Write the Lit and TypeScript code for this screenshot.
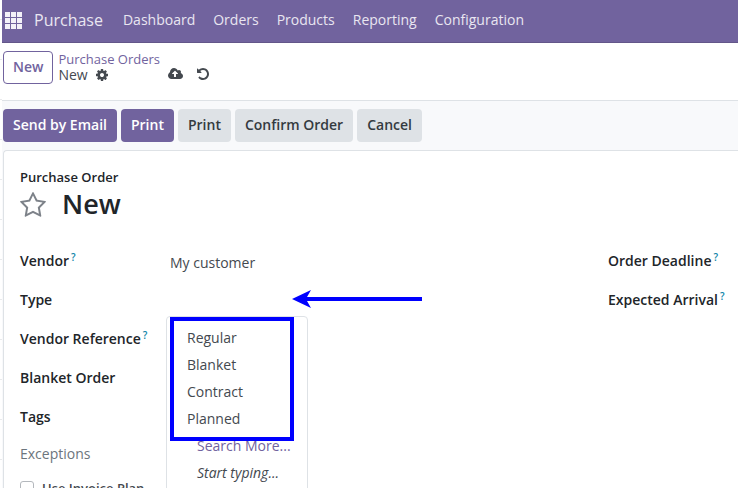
import { LitElement, html, css, svg, nothing } from "lit";
import { customElement, state } from "lit/decorators.js";

const ICONS: Record<string, { box: string; path: string }> = {
  cog: {
    box: "128 128 1536 1536",
    path: "M1152 896q0-106-75-181t-181-75-181 75-75 181 75 181 181 75 181-75 75-181zm512-109v222q0 12-8 23t-20 13l-185 28q-19 54-39 91 35 50 107 138 10 12 10 25t-9 23q-27 37-99 108t-94 71q-12 0-26-9l-138-108q-44 23-91 38-16 136-29 186-7 28-36 28h-222q-14 0-24.500-8.500t-11.500-21.500l-28-184q-49-16-90-37l-141 107q-10 9-25 9-14 0-25-11-126-114-165-168-7-10-7-23 0-12 8-23 15-21 51-66.500t54-70.500q-27-50-41-99l-183-27q-13-2-21-12.500t-8-23.500v-222q0-12 8-23t19-13l186-28q14-46 39-92-40-57-107-138-10-12-10-24 0-10 9-23 26-36 98.500-107.500t94.500-71.500q13 0 26 10l138 107q44-23 91-38 16-136 29-186 7-28 36-28h222q14 0 24.500 8.500t11.500 21.500l28 184q49 16 90 37l142-107q9-9 24-9 13 0 25 10 129 119 165 170 7 8 7 22 0 12-8 23-15 21-51 66.500t-54 70.500q26 50 41 98l183 28q13 2 21 12.500t8 23.500z",
  },
  cloud: {
    box: "-64 128 1920 1536",
    path: "M1216 864q0-14-9-23l-352-352q-9-9-23-9t-23 9l-351 351q-10 12-10 24 0 14 9 23t23 9h224v352q0 13 9.500 22.500t22.500 9.500h192q13 0 22.500-9.500t9.500-22.500v-352h224q13 0 22.500-9.500t9.500-22.500zm640 288q0 159-112.500 271.500t-271.500 112.500h-1088q-185 0-316.500-131.500t-131.500-316.500q0-130 70-240t188-165q-2-30-2-43 0-212 150-362t362-150q156 0 285.500 87t188.500 231q71-62 166-62 106 0 181 75t75 181q0 76-41 138 130 31 213.500 135.500t83.500 238.500z",
  },
  undo: {
    box: "128 128 1536 1536",
    path: "M1664 896q0 156-61 298t-164 245-245 164-298 61q-172 0-327-72.500t-264-204.500q-7-10-6.500-22.500t8.500-20.500l137-138q10-9 25-9 16 2 23 12 73 95 179 147t225 52q104 0 198.500-40.500t163.500-109.500 109.500-163.500 40.500-198.500-40.500-198.500-109.500-163.500-163.500-109.500-198.500-40.500q-98 0-188 35.500t-160 101.500l137 138q31 30 14 69-17 40-59 40h-448q-26 0-45-19t-19-45v-448q0-42 40-59 39-17 69 14l130 129q107-101 244.500-156.500t284.500-55.500q156 0 298 61t245 164 164 245 61 298z",
  },
  star: {
    box: "0 32 1664 1600",
    path: "M1137 1004l306-297-422-62-189-382-189 382-422 62 306 297-73 421 378-199 377 199zm527-357q0 22-26 48l-363 354 86 500q1 7 1 20 0 50-41 50-19 0-40-12l-449-236-449 236q-22 12-40 12-21 0-31.500-14.500t-10.500-35.500q0-6 2-20l86-500-364-354q-25-27-25-48 0-37 56-46l502-73 225-455q19-41 49-41t49 41l225 455 502 73q56 9 56 46z",
  },
};

const icon = (name: string, cls: string) => html`
  <svg class="icon ${cls}" viewBox=${ICONS[name].box} aria-hidden="true">
    <path fill="currentColor" d=${ICONS[name].path}></path>
  </svg>`;

const MENU = ["Dashboard", "Orders", "Products", "Reporting", "Configuration"];
const TYPES = ["Regular", "Blanket", "Contract", "Planned"];

interface Field {
  id: string;
  label: string;
  help?: boolean;
  value?: string;
}

const LEFT: Field[] = [
  { id: "vendor", label: "Vendor", help: true, value: "My customer" },
  { id: "type", label: "Type" },
  { id: "reference", label: "Vendor Reference", help: true },
  { id: "blanket", label: "Blanket Order" },
  { id: "tags", label: "Tags" },
];
const RIGHT: Field[] = [
  { id: "deadline", label: "Order Deadline", help: true },
  { id: "arrival", label: "Expected Arrival", help: true },
];

@customElement("app-root")
export class AppRoot extends LitElement {
  @state() private type = "";

  static styles = css`
    :host {
      display: block;
      box-sizing: border-box;
      height: 100vh;
      overflow: hidden;
      padding: 0 0 1px 2px;
      background: repeating-linear-gradient(#fff 0 19px, #e9eaec 19px 20px, #fff 20px 40px);
      font: 14px/20px "Open Sans", "Noto Sans", sans-serif;
      color: #44494f;
    }
    * { box-sizing: border-box; }
    button, input { font: inherit; color: inherit; }
    button { cursor: pointer; }
    a { text-decoration: none; color: inherit; }
    .page {
      display: flex;
      flex-direction: column;
      height: 100%;
      overflow: hidden;
      background: #f8f9fb;
    }
    .icon { display: block; flex: none; }

    .nav {
      display: flex;
      align-items: center;
      flex: none;
      height: 43px;
      padding: 0 3px 2px;
      background: #71639e;
      border-bottom: 1px solid #635689;
      color: #e9e6f1;
    }
    .plain {
      display: flex;
      padding: 0;
      border: 0;
      background: none;
    }
    .apps { width: 17px; height: 17px; }
    .brand { margin: 0 20px 0 12px; font-size: 16px; }
    .menu { display: flex; gap: 18px; }

    .control {
      display: flex;
      align-items: flex-start;
      flex: none;
      height: 58px;
      padding: 8px 1px;
      background: #fff;
      border-bottom: 1px solid #dee2e6;
    }
    .btn {
      height: 33px;
      padding: 0 10px 1px;
      border: 0;
      border-radius: 4px;
      background: #dee2e6;
      color: #343a40;
      font-weight: 600;
      white-space: nowrap;
    }
    .primary { background: #71639e; color: #fff; }
    .outline {
      padding: 0 9px 2px;
      border: 1px solid #71639e;
      background: #fff;
      color: #71639e;
    }
    .crumbs { margin-left: 5px; line-height: 16px; }
    .crumbs a { display: block; color: #71639e; font-size: 13px; font-weight: 500; }
    .current { display: flex; align-items: center; gap: 8px; }
    .small { width: 12px; height: 12px; }
    .tools { display: flex; align-items: center; gap: 14px; margin: 17px 0 0 8px; }
    .cloud { width: 15px; height: 12px; }

    .actions { display: flex; flex: none; gap: 4px; padding: 8px 1px; }

    .sheet {
      flex: 1 0 auto;
      margin-left: 1px;
      padding: 16px 0 0 16px;
      background: #fff;
      border: solid #dee2e6;
      border-width: 1px 0 0 1px;
      border-top-left-radius: 4px;
    }
    .label, .kind {
      font-weight: 600;
      color: #212529;
      white-space: nowrap;
    }
    .kind { font-size: 13px; }
    .title { display: flex; align-items: center; gap: 16px; height: 34px; }
    .star { width: 26px; height: 25px; color: #7d8289; }
    h1 { margin: 0; font-size: 27px; line-height: 34px; font-weight: 600; color: #212529; }

    .groups { display: flex; align-items: flex-start; margin-top: 20px; }
    .group { display: flex; flex-direction: column; }
    .main { flex: 1; }
    .side { flex: 0 0 130px; }
    .row { display: flex; align-items: center; height: 39px; }
    .main .label { flex: 0 0 146px; }
    .help { margin-left: 2px; color: #0e84a8; font-size: 10px; line-height: 10px; font-weight: 600; vertical-align: 5px; }
    .value { position: relative; flex: 1; height: 31px; display: flex; align-items: center; }
    .value input { width: 138px; padding: 6px 4px 2px; border: 0; outline: 0; background: none; }

    .dropdown {
      position: absolute;
      top: 32px;
      left: 0;
      width: 142px;
      padding: 7px 0 8px;
      background: #fff;
      border: 1px solid #dee2e6;
      border-radius: 4px;
      z-index: 1;
    }
    .option {
      display: block;
      width: 100%;
      height: 27px;
      padding: 0 20px;
      border: 0;
      background: none;
      text-align: left;
    }
    .extra { padding: 0 0 0 30px; white-space: nowrap; }
    .more { color: #71639e; }
    .hint { font-style: italic; line-height: 27px; }
    .frame {
      position: absolute;
      top: 0;
      left: 3px;
      width: 124px;
      height: 124px;
      border: 4px solid #00f;
      pointer-events: none;
    }
    .arrow { position: absolute; left: 126px; top: 5px; width: 130px; height: 20px; }

    .section { height: 38px; line-height: 36px; color: #6c757d; }
    .check { display: flex; align-items: center; gap: 8px; margin-top: 4px; }
    .check input {
      appearance: none;
      width: 14px;
      height: 14px;
      margin: 0;
      border: 1px solid #b4b8bd;
      border-radius: 3px;
      background: #fff;
    }
    .check .label { color: #44494f; font-size: 13px; }
  `;

  private renderType() {
    return html`
      <svg class="arrow" viewBox="0 0 130 20" aria-hidden="true">
        ${svg`<path fill="#00f" d="M0 10 19 1 15 8H130V12H15L19 19Z"></path>`}
      </svg>
      <div class="dropdown">
        ${TYPES.map((t) => html`<button class="option" @click=${() => (this.type = t)}>${t}</button>`)}
        <button class="option extra more">Search More...</button>
        <div class="extra hint">Start typing...</div>
        <div class="frame"></div>
      </div>`;
  }

  private renderField(f: Field, withValue: boolean) {
    const value = f.id === "type" ? this.type : f.value ?? "";
    return html`
      <div class="row">
        <label class="label" for=${withValue ? f.id : nothing}>${f.label}${f.help
          ? html`<sup class="help">?</sup>`
          : nothing}</label>
        ${withValue
          ? html`<div class="value">
              <input id=${f.id} .value=${value} autocomplete="off" />
              ${f.id === "type" ? this.renderType() : nothing}
            </div>`
          : nothing}
      </div>`;
  }

  render() {
    return html`
      <div class="page">
        <nav class="nav">
          <button class="plain" aria-label="Apps">
            <svg class="icon apps" viewBox="0 0 17 17" aria-hidden="true">
              ${[0, 6, 12].map((y) => [0, 6, 12].map(
                (x) => svg`<rect x=${x} y=${y} width="5" height="5" fill="#f3f1f8"></rect>`))}
            </svg>
          </button>
          <a class="brand" href="#">Purchase</a>
          <div class="menu">${MENU.map((m) => html`<a href="#">${m}</a>`)}</div>
        </nav>
        <header class="control">
          <button class="btn outline">New</button>
          <div class="crumbs">
            <a href="#">Purchase Orders</a>
            <div class="current">
              <span>New</span>
              <button class="plain" aria-label="Actions">${icon("cog", "small")}</button>
            </div>
          </div>
          <div class="tools">
            <button class="plain" aria-label="Save">${icon("cloud", "cloud")}</button>
            <button class="plain" aria-label="Discard">${icon("undo", "small")}</button>
          </div>
        </header>
        <div class="actions">
          <button class="btn primary">Send by Email</button>
          <button class="btn primary">Print</button>
          <button class="btn">Print</button>
          <button class="btn">Confirm Order</button>
          <button class="btn">Cancel</button>
        </div>
        <main class="sheet">
          <div class="kind">Purchase Order</div>
          <div class="title">
            <button class="plain" aria-label="Priority">${icon("star", "star")}</button>
            <h1>New</h1>
          </div>
          <div class="groups">
            <div class="group main">${LEFT.map((f) => this.renderField(f, true))}</div>
            <div class="group side">${RIGHT.map((f) => this.renderField(f, false))}</div>
          </div>
          <div class="section">Exceptions</div>
          <div class="check">
            <input id="plan" type="checkbox" />
            <label class="label" for="plan">Use Invoice Plan</label>
          </div>
        </main>
      </div>`;
  }
}
